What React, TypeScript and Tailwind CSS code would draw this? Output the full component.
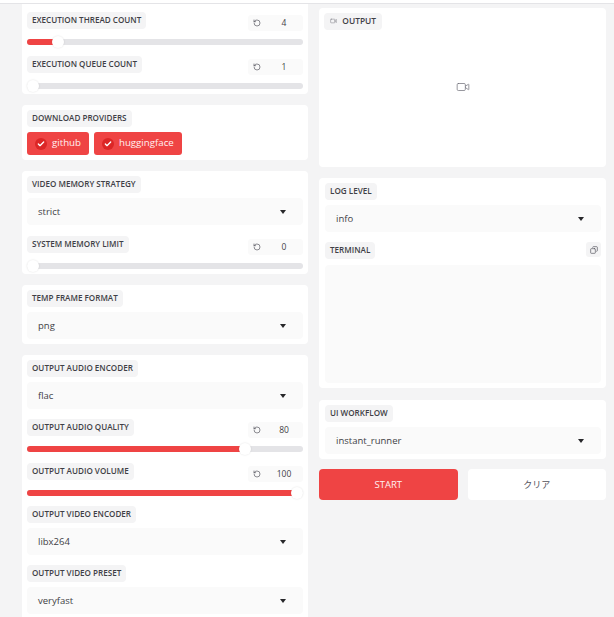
import { Check, Copy, RotateCcw, Video } from 'lucide-react';

const Label = ({ children }: { children: React.ReactNode }) => (
  <span className="inline-flex h-[17px] items-center self-start rounded-[4px] bg-[#f4f4f5] px-[5px] pb-px text-[8.1px] leading-none font-semibold text-[#3f3f46] uppercase">
    {children}
  </span>
);

const Select = ({ label, value }: { label: string; value: string }) => (
  <div className="flex flex-col gap-[5px]">
    <Label>{label}</Label>
    <div className="flex h-[27px] items-center justify-between rounded-[4px] bg-[#fafafa] pt-px pr-[17px] pl-[11px] text-[9.5px] text-[#3f3f46]">
      <span>{value}</span>
      <span className="h-0 w-0 border-x-[3.5px] border-t-[4px] border-x-transparent border-t-[#27272a]" />
    </div>
  </div>
);

const Slider = ({ label, value, pct }: { label: string; value: string; pct: number }) => (
  <div className="flex flex-col">
    <div className="flex items-start justify-between">
      <Label>{label}</Label>
      <div className="mt-[3px] flex h-[16px] w-[55px] items-center rounded-[3px] bg-[#fafafa] pl-[5px] text-[8.5px] text-[#3f3f46]">
        <RotateCcw className="h-[8px] w-[8px] text-[#52525b]" strokeWidth={2} />
        <span className="flex-1 pl-[4px] text-center">{value}</span>
      </div>
    </div>
    <div className="relative mt-[8px] h-[6px] rounded-full bg-[#e4e4e7]">
      <div className="h-full rounded-full bg-[#ef4444]" style={{ width: `${pct}%` }} />
      <span
        className="absolute top-1/2 h-[12px] w-[12px] -translate-x-1/2 -translate-y-1/2 rounded-full bg-white shadow-[0_0_2px_rgba(0,0,0,0.12)]"
        style={{ left: `${pct === 0 ? 2 : pct}%` }}
      />
    </div>
  </div>
);

const Provider = ({ name }: { name: string }) => (
  <div className="flex h-[23px] items-center gap-[5px] rounded-[3px] bg-[#ef4444] px-[8px] text-[9.7px] text-[#fff1f1]">
    <span className="flex h-[12px] w-[12px] items-center justify-center rounded-full bg-[#dc2626]">
      <Check className="h-[8px] w-[8px] text-white" strokeWidth={4} />
    </span>
    {name}
  </div>
);

export default function App() {
  return (
    <div className="h-[617px] overflow-hidden bg-[#f4f4f5] font-['Open_Sans',sans-serif]">
      <div className="h-[4px] border-b border-[#e4e4e7] bg-white" />
      <div className="flex gap-[11px] pr-[8px] pl-[22px]">
        {/* Left column */}
        <div className="flex w-[286px] flex-col gap-[11px]">
          <div className="flex flex-col gap-[11px] rounded-b-[4px] bg-white px-[5px] pt-[8px] pb-[5px]">
            <Slider label="Execution Thread Count" value="4" pct={11.2} />
            <Slider label="Execution Queue Count" value="1" pct={0} />
          </div>

          <div className="flex flex-col gap-[5px] rounded-[4px] bg-white p-[5px]">
            <Label>Download Providers</Label>
            <div className="flex gap-[5px]">
              <Provider name="github" />
              <Provider name="huggingface" />
            </div>
          </div>

          <div className="flex flex-col gap-[11px] rounded-[4px] bg-white p-[5px]">
            <Select label="Video Memory Strategy" value="strict" />
            <Slider label="System Memory Limit" value="0" pct={0} />
          </div>

          <div className="rounded-[4px] bg-white p-[5px]">
            <Select label="Temp Frame Format" value="png" />
          </div>

          <div className="flex flex-col gap-[10px] rounded-t-[4px] bg-white p-[5px]">
            <Select label="Output Audio Encoder" value="flac" />
            <div className="flex flex-col gap-[11px]">
              <Slider label="Output Audio Quality" value="80" pct={79} />
              <Slider label="Output Audio Volume" value="100" pct={98} />
            </div>
            <Select label="Output Video Encoder" value="libx264" />
            <Select label="Output Video Preset" value="veryfast" />
          </div>
        </div>

        {/* Right column */}
        <div className="flex w-[287px] flex-col gap-[11px] pt-[4px]">
          <div className="flex h-[159px] flex-col rounded-[4px] bg-white p-[5px]">
            <span className="inline-flex h-[17px] w-[58px] items-center gap-[5px] self-start rounded-[4px] bg-[#f4f4f5] px-[6px] pb-px text-[8.4px] font-semibold text-[#3f3f46] uppercase">
              <Video className="h-[8px] w-[8px] text-[#71717a]" strokeWidth={1.5} />
              Output
            </span>
            <div className="flex flex-1 items-center justify-center pb-[18px]">
              <Video className="h-[14px] w-[14px] text-[#71717a]" strokeWidth={1.25} />
            </div>
          </div>

          <div className="flex h-[210px] flex-col gap-[10px] rounded-[4px] bg-white py-[5px] pr-[5px] pl-[6px]">
            <Select label="Log Level" value="info" />
            <div className="flex flex-1 flex-col gap-[6px]">
              <div className="flex items-start justify-between">
                <Label>Terminal</Label>
                <span className="flex h-[15px] w-[15px] items-center justify-center rounded-[3px] bg-[#f4f4f5]">
                  <Copy className="h-[8px] w-[8px] -scale-x-100 text-[#52525b]" strokeWidth={2} />
                </span>
              </div>
              <div className="flex-1 rounded-[4px] bg-[#fafafa]" />
            </div>
          </div>

          <div className="mt-px rounded-[4px] bg-white py-[5px] pr-[5px] pl-[6px]">
            <Select label="UI Workflow" value="instant_runner" />
          </div>

          <div className="-mt-px flex gap-[10px]">
            <button className="h-[31px] flex-1 rounded-[4px] bg-[#ef4444] pt-px text-[9.5px] font-medium text-[#fff1f1]">
              START
            </button>
            <button className="h-[31px] flex-1 rounded-[4px] bg-white font-['Open_Sans','Noto_Sans_CJK_JP',sans-serif] text-[9px] text-[#52525b]">
              クリア
            </button>
          </div>
        </div>
      </div>
    </div>
  );
}
